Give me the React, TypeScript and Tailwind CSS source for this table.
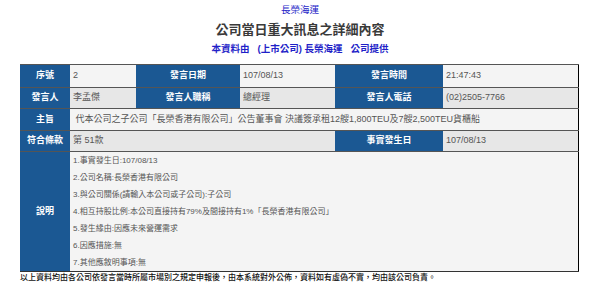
const font = { fontFamily: '"Liberation Sans", "Noto Sans CJK TC", sans-serif' };

const notes = [
  "1.事實發生日:107/08/13",
  "2.公司名稱:長榮香港有限公司",
  "3.與公司關係(請輸入本公司或子公司):子公司",
  "4.相互持股比例:本公司直接持有79%及間接持有1%「長榮香港有限公司」",
  "5.發生緣由:因應未來營運需求",
  "6.因應措施:無",
  "7.其他應敘明事項:無",
];

function Th({ children }: { children: React.ReactNode }) {
  return (
    <td className="bg-[#1b5893] text-center align-middle text-[9px] font-bold text-white">{children}</td>
  );
}

function Td({ children, colSpan }: { children: React.ReactNode; colSpan?: number }) {
  return (
    <td colSpan={colSpan} className="px-[3px] align-middle text-[9px] text-[#555]">
      {children}
    </td>
  );
}

export default function App() {
  return (
    <div className="h-[295px] w-[600px] bg-white" style={font}>
      <div className="flex flex-col items-center pt-[3px]">
        <div className="h-[13px] text-[9.5px] leading-[13px] text-[#1f1fc8]">長榮海運</div>
        <div className="mt-[4px] h-[20px] text-[13px] font-bold leading-[20px] text-[#3a3a3a]">
          公司當日重大訊息之詳細內容
        </div>
        <div className="mt-[2px] flex h-[13px] gap-[8px] text-[9.5px] font-semibold leading-[13px] text-[#1f1fc8]">
          <span>本資料由</span>
          <span>(上市公司) 長榮海運</span>
          <span>公司提供</span>
        </div>
      </div>

      <table className="ml-[20px] mt-[9px] w-[558px] table-fixed border-collapse border-r border-b border-r-black border-b-[#333]">
        <colgroup>
          <col className="w-[50px]" />
          <col className="w-[66px]" />
          <col className="w-[104px]" />
          <col className="w-[95px]" />
          <col className="w-[108px]" />
          <col className="w-[135px]" />
        </colgroup>
        <tbody>
          <tr className="h-[23px] border-t border-[#555] bg-[#f4f4f4]">
            <Th>序號</Th>
            <Td>2</Td>
            <Th>發言日期</Th>
            <Td>107/08/13</Td>
            <Th>發言時間</Th>
            <Td>21:47:43</Td>
          </tr>
          <tr className="h-[21px] border-t border-[#555] bg-[#e7e7e7]">
            <Th>發言人</Th>
            <Td>李孟傑</Td>
            <Th>發言人職稱</Th>
            <Td>總經理</Td>
            <Th>發言人電話</Th>
            <Td>(02)2505-7766</Td>
          </tr>
          <tr className="h-[22px] border-t border-[#555] bg-[#f4f4f4]">
            <Th>主旨</Th>
            <Td colSpan={5}>
              &nbsp;代本公司之子公司「長榮香港有限公司」公告董事會 決議簽承租12艘1,800TEU及7艘2,500TEU貨櫃船
            </Td>
          </tr>
          <tr className="h-[21px] border-t border-[#555] bg-[#e7e7e7]">
            <Th>符合條款</Th>
            <Td colSpan={3}>第 51款</Td>
            <Th>事實發生日</Th>
            <Td>107/08/13</Td>
          </tr>
          <tr className="h-[119px] border-t border-[#555] bg-[#f4f4f4]">
            <Th>說明</Th>
            <td colSpan={5} className="px-[3px] align-middle text-[8px] leading-[17px] text-[#555]">
              {notes.map((n) => (
                <div key={n}>{n}</div>
              ))}
            </td>
          </tr>
        </tbody>
      </table>

      <p className="ml-[20px] text-[8px] font-medium leading-[12px] text-[#111]">
        以上資料均由各公司依發言當時所屬市場別之規定申報後，由本系統對外公佈，資料如有虛偽不實，均由該公司負責。
      </p>
    </div>
  );
}
